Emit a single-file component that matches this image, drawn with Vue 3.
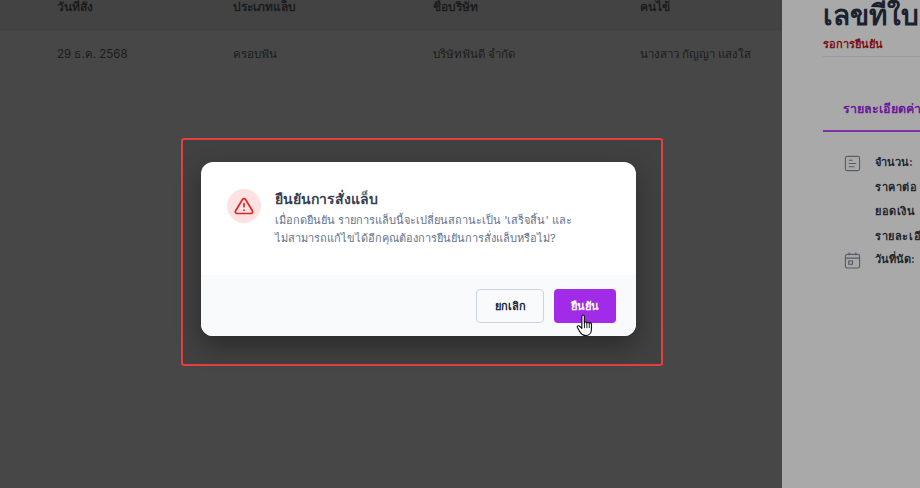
<template>
  <div class="screen">
    <main class="list">
      <div class="table-row table-head">
        <span v-for="col in columns" :key="col">{{ col }}</span>
      </div>
      <div class="table-row table-body">
        <span v-for="cell in row" :key="cell">{{ cell }}</span>
      </div>
    </main>

    <aside class="drawer">
      <h1 class="drawer-title">เลขที่ใบ</h1>
      <p class="drawer-status">รอการยืนยัน</p>
      <div class="drawer-tab"><span>รายละเอียดค่า</span></div>
      <div class="detail">
        <svg class="detail-icon" viewBox="0 0 18 18" fill="none" stroke="currentColor" stroke-width="1.2">
          <rect x="1.5" y="1.5" width="15" height="15" rx="2" />
          <path d="M5 5.5h4M5 9h8M5 12.5h6" />
        </svg>
        <div class="detail-lines">
          <span>จำนวน:</span>
          <span class="wide">ราคาต่อ</span>
          <span class="wide">ยอดเงิน</span>
          <span class="wide">รายละเอี</span>
        </div>
      </div>
      <div class="detail detail-date">
        <svg class="detail-icon" viewBox="0 0 18 18" fill="none" stroke="currentColor" stroke-width="1.2">
          <rect x="1.5" y="2.5" width="15" height="14.5" rx="2" />
          <path d="M1.5 6.500h15M5.500 0.500v3M12.500 0.500v3" />
          <rect x="5" y="9.500" width="4" height="3.500" />
        </svg>
        <div class="detail-lines"><span>วันที่นัด:</span></div>
      </div>
    </aside>

    <div class="highlight">
      <div class="modal">
        <div class="modal-body">
          <div class="alert-icon">
            <svg viewBox="0 0 24 24" width="20" height="20" fill="none" stroke="#dc2626" stroke-width="2" stroke-linecap="round" stroke-linejoin="round">
              <path d="M10.300 3.900 1.800 18a2 2 0 0 0 1.700 3h17a2 2 0 0 0 1.700-3L13.700 3.900a2 2 0 0 0-3.400 0Z" />
              <path d="M12 9v4M12 17h.01" />
            </svg>
          </div>
          <div>
            <h2 class="modal-title">ยืนยันการสั่งแล็บ</h2>
            <p class="modal-text">เมื่อกดยืนยัน รายการแล็บนี้จะเปลี่ยนสถานะเป็น 'เสร็จสิ้น' และ<br />ไม่สามารถแก้ไขได้อีกคุณต้องการยืนยันการสั่งแล็บหรือไม่?</p>
          </div>
        </div>
        <div class="modal-footer">
          <button class="btn btn-cancel">ยกเลิก</button>
          <button class="btn btn-confirm">ยืนยัน</button>
        </div>
      </div>
      <svg class="cursor" viewBox="0 0 18 22" width="19" height="23">
        <path d="M5.500 2.200c0-1.600 2.400-1.600 2.400 0v6.300c.3-1.400 2.300-1.300 2.400.2.400-1.200 2.200-1 2.300.4.500-1 2-.7 2.100.6v4.600c0 3.600-2 6.400-5.400 6.400-2.600 0-4-1-5.200-3L1.300 13.200c-.8-1.400 1-2.600 2.100-1.500l2.100 2.100Z" fill="#fff" stroke="#111" stroke-width="1.100" stroke-linejoin="round" />
        <path d="M8 8.500v5M10.300 8.700v4.800M12.600 9.300v4.200" stroke="#111" stroke-width=".9" fill="none" />
      </svg>
    </div>
  </div>
</template>

<script setup>
const columns = ['วันที่สั่ง', 'ประเภทแล็บ', 'ชื่อบริษัท', 'คนไข้']
const row = ['29 ธ.ค. 2568', 'ครอบฟัน', 'บริษัทฟันดี จำกัด', 'นางสาว กัญญา แสงใส']
</script>

<style>
html, body {
  margin: 0;
  overflow: hidden;
}
</style>

<style scoped>
.screen {
  position: relative;
  display: flex;
  width: 920px;
  height: 488px;
  overflow: hidden;
  font-family: Inter, "Noto Sans", "Liberation Sans", sans-serif;
  background: #474747;
}

.list {
  width: 782px;
  flex-shrink: 0;
}
.table-row {
  display: grid;
  grid-template-columns: 176px 200px 207px 1fr;
  padding-left: 57px;
  color: #1c1c1c;
}
.table-head {
  height: 30px;
  box-sizing: border-box;
  font-size: 12px;
  font-weight: 700;
  background: #434343;
  border-bottom: 1px solid #3f3f3f;
  line-height: 14px;
}
.table-body {
  padding-top: 17px;
  font-size: 11.500px;
  line-height: 14px;
}

.drawer {
  flex: 1;
  background: #a9a9a9;
  padding-left: 41px;
  overflow: hidden;
  white-space: nowrap;
}
.drawer-title {
  margin: 0;
  font-size: 28px;
  line-height: 30px;
  font-weight: 700;
  color: #1a2230;
}
.drawer-status {
  margin: 7px 0 0;
  height: 19px;
  font-size: 11px;
  line-height: 14px;
  font-weight: 700;
  color: #7f1010;
  border-bottom: 1px solid #969aa0;
}
.drawer-tab {
  margin-top: 42px;
  height: 31px;
  padding-left: 20px;
  font-size: 12.500px;
  line-height: 20px;
  font-weight: 600;
  color: #6a1b9a;
  border-bottom: 2px solid #7b2fa8;
}
.detail {
  display: flex;
  gap: 14px;
  margin: 23px 0 0 21px;
}
.detail-date {
  margin-top: 9px;
}
.detail-icon {
  width: 17px;
  height: 17px;
  flex-shrink: 0;
  color: #565e6b;
}
.detail-lines {
  display: flex;
  flex-direction: column;
  gap: 10px;
  font-size: 11px;
  line-height: 14.500px;
  font-weight: 700;
  color: #23272e;
}

.wide {
  letter-spacing: 0.6px;
}

.highlight {
  position: absolute;
  left: 181px;
  top: 138px;
  width: 482px;
  height: 228px;
  box-sizing: border-box;
  padding: 22px 0 0 18px;
  border: 2px solid #e53e3e;
  border-radius: 3px;
  background: #414141;
}
.modal {
  width: 435px;
  height: 174px;
  display: flex;
  flex-direction: column;
  background: #fff;
  border-radius: 12px;
  overflow: hidden;
  box-shadow: 0 10px 25px rgba(0, 0, 0, 0.35);
}
.modal-body {
  flex: 1;
  display: flex;
  gap: 14px;
  padding: 27px 26px 0;
}
.alert-icon {
  width: 34px;
  height: 34px;
  flex-shrink: 0;
  display: flex;
  align-items: center;
  justify-content: center;
  border-radius: 50%;
  background: #fee2e2;
}
.modal-title {
  margin: 0;
  font-size: 14px;
  line-height: 20px;
  font-weight: 600;
  color: #374151;
}
.modal-text {
  margin: 2px 0 0;
  font-size: 11px;
  line-height: 18px;
  color: #64748b;
}
.modal-footer {
  height: 61px;
  box-sizing: border-box;
  display: flex;
  justify-content: flex-end;
  gap: 10px;
  padding: 14px 20px 0;
  background: #f8fafc;
}
.btn {
  height: 34px;
  border-radius: 4px;
  font-family: inherit;
  font-size: 11px;
  font-weight: 600;
}
.btn-cancel {
  width: 68px;
  background: #f8fafc;
  border: 1px solid #cbd5e1;
  color: #1f2937;
}
.btn-confirm {
  width: 62px;
  background: #a22be8;
  border: none;
  color: #fff;
}
.cursor {
  position: absolute;
  left: 393px;
  top: 174px;
}
</style>
